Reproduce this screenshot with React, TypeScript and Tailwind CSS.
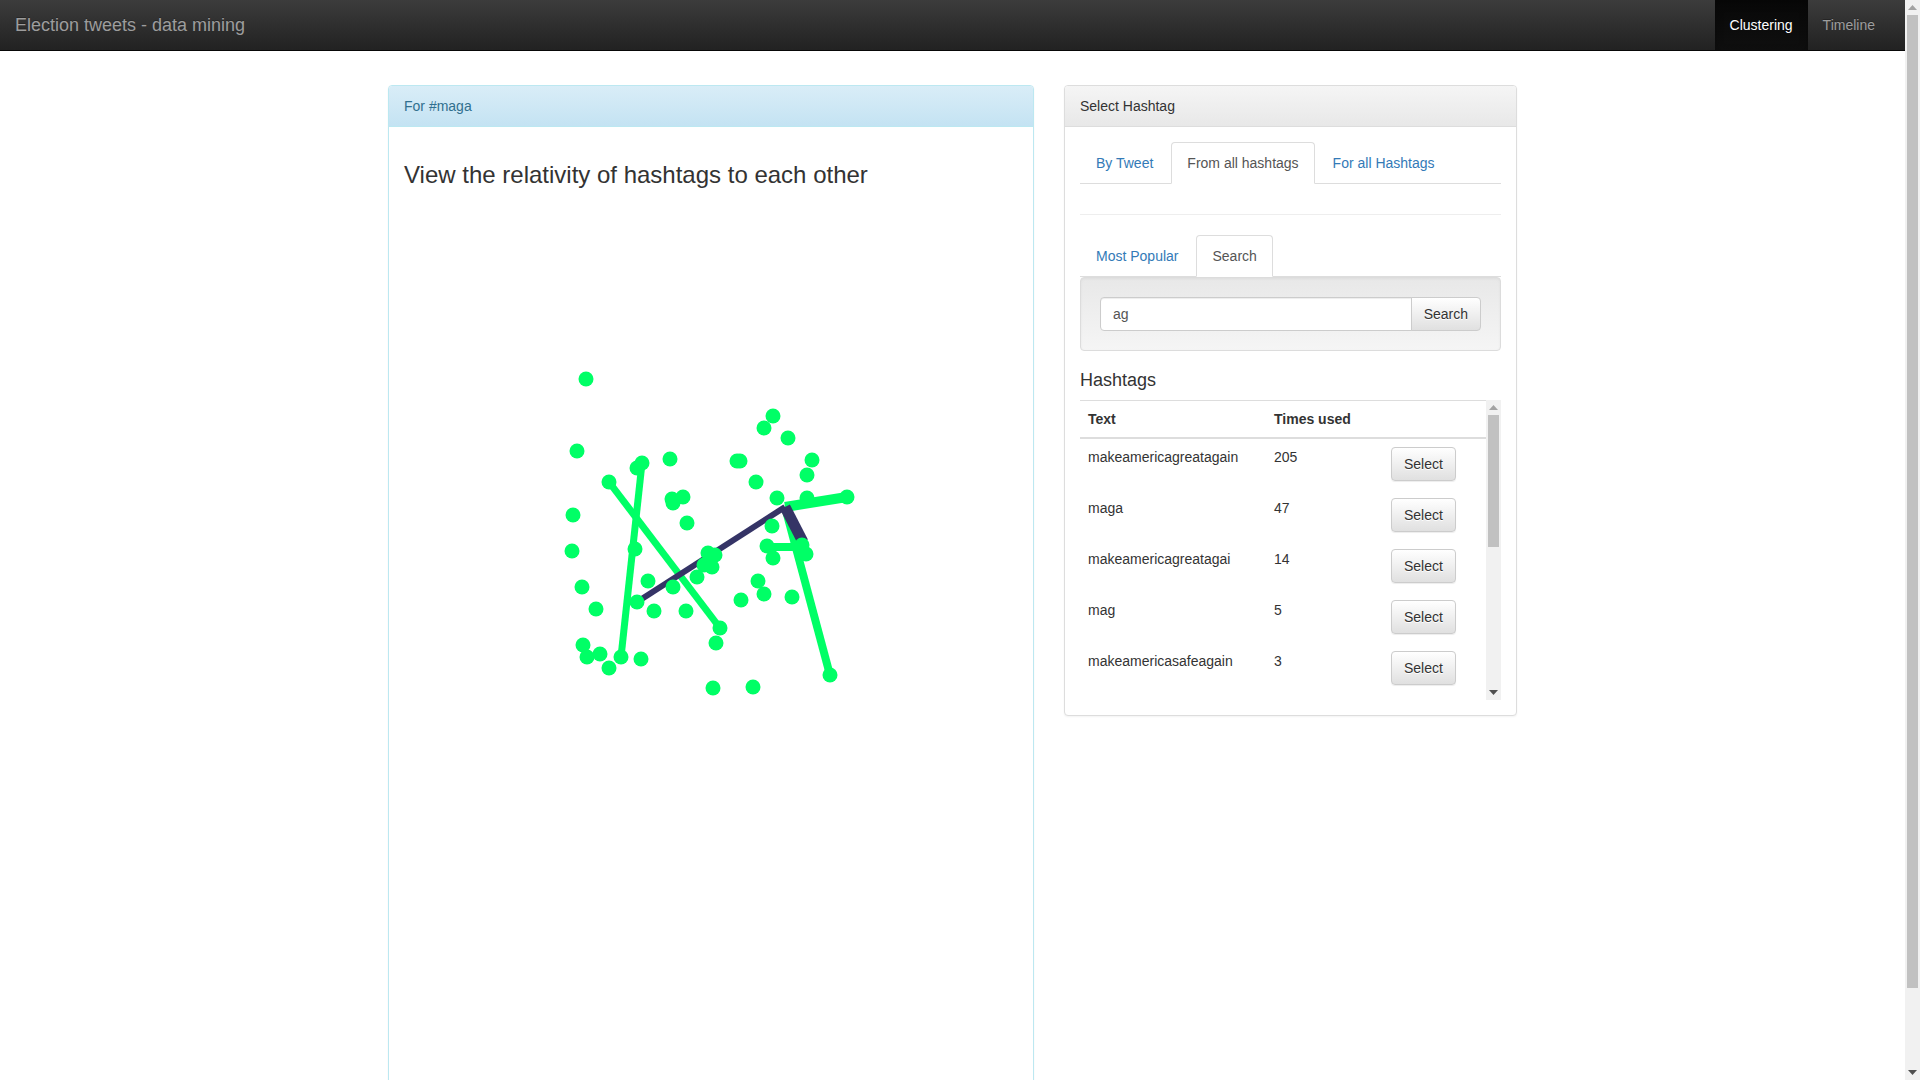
import React from "react";

// node positions inside the graph canvas (canvas origin = top-left of svg)
const nodes: [number, number][] = [
  [182, 181], [173, 253], [169, 317], [168, 353], [178, 389], [192, 411],
  [179, 447], [183, 459], [196, 456], [205, 470], [217, 459], [237, 461],
  [233, 404], [250, 413], [244, 383], [231, 351], [205, 284], [233, 270],
  [238, 265], [266, 261], [268, 301], [279, 299], [269, 305], [283, 325],
  [269, 389], [282, 413], [293, 379], [304, 355], [311, 357], [300, 367],
  [308, 369], [316, 430], [312, 445], [309, 490], [349, 489], [333, 263],
  [336, 263], [352, 284], [360, 230], [369, 218], [384, 240], [408, 262],
  [403, 277], [373, 300], [403, 300], [443, 299], [368, 328], [363, 348],
  [369, 360], [398, 347], [402, 356], [337, 402], [354, 383], [360, 396],
  [388, 399], [426, 477],
];

const greenLinks = [
  { x1: 205, y1: 284, x2: 316, y2: 430, w: 7 },
  { x1: 238, y1: 265, x2: 217, y2: 459, w: 7 },
  { x1: 381, y1: 309, x2: 443, y2: 299, w: 10 },
  { x1: 381, y1: 309, x2: 426, y2: 477, w: 8 },
  { x1: 363, y1: 349, x2: 399, y2: 349, w: 8 },
];

const darkLinks = [
  { x1: 233, y1: 404, x2: 381, y2: 309, w: 6 },
  { x1: 381, y1: 309, x2: 399, y2: 344, w: 11 },
];

const hashtags = [
  { text: "makeamericagreatagain", count: 205 },
  { text: "maga", count: 47 },
  { text: "makeamericagreatagai", count: 14 },
  { text: "mag", count: 5 },
  { text: "makeamericasafeagain", count: 3 },
];

function Tab({ label, active }: { label: string; active?: boolean }) {
  return (
    <li className="-mb-px">
      <a
        className={
          active
            ? "block mr-[2px] px-[15px] py-[10px] leading-[20px] rounded-t-[4px] border border-[#ddd] border-b-transparent bg-white text-[#555] cursor-default"
            : "block mr-[2px] px-[15px] py-[10px] leading-[20px] rounded-t-[4px] border border-transparent text-[#337ab7] cursor-pointer"
        }
      >
        {label}
      </a>
    </li>
  );
}

function SelectButton() {
  return (
    <button className="h-[34px] px-[12px] text-[14px] leading-[20px] text-[#333] rounded-[4px] border border-[#ccc] bg-gradient-to-b from-white to-[#e0e0e0] shadow-[inset_0_1px_0_rgba(255,255,255,.15),0_1px_1px_rgba(0,0,0,.075)] [text-shadow:0_1px_0_#fff]">
      Select
    </button>
  );
}

// classic browser scrollbar look (the screenshot had native scrollbars)
function Arrow({ up, dark }: { up?: boolean; dark?: boolean }) {
  return (
    <div className="h-[15px] flex items-center justify-center shrink-0">
      <svg width="9" height="5" viewBox="0 0 9 5">
        <polygon points={up ? "0,5 4.5,0 9,5" : "0,0 4.5,5 9,0"} fill={dark ? "#505050" : "#a3a3a3"} />
      </svg>
    </div>
  );
}

function Scrollbar({ thumbTop, thumbHeight }: { thumbTop: number; thumbHeight: number }) {
  return (
    <div className="w-[15px] shrink-0 h-full bg-[#f1f1f1] flex flex-col">
      <Arrow up />
      <div className="flex-1 relative">
        <div
          className="absolute left-[2px] right-[2px] bg-[#c1c1c1]"
          style={{ top: thumbTop, height: thumbHeight }}
        />
      </div>
      <Arrow dark />
    </div>
  );
}

export default function App() {
  return (
    <div className="h-screen flex overflow-hidden bg-white font-['Liberation_Sans',Arial,sans-serif] text-[14px] leading-[20px] text-[#333]">
      <div className="flex-1 min-w-0 overflow-hidden">
        {/* Navbar */}
        <nav className="h-[51px] flex justify-between bg-gradient-to-b from-[#3c3c3c] to-[#222] border-b border-[#080808]">
          <a className="px-[15px] py-[15px] text-[18px] leading-[20px] text-[#9d9d9d] [text-shadow:0_-1px_0_rgba(0,0,0,.25)]">
            Election tweets - data mining
          </a>
          <ul className="flex pr-[15px]">
            <li className="flex">
              <a className="px-[15px] py-[15px] leading-[20px] text-white bg-gradient-to-b from-[#080808] to-[#0f0f0f] shadow-[inset_0_3px_9px_rgba(0,0,0,.25)] [text-shadow:0_-1px_0_rgba(0,0,0,.25)]">
                Clustering
              </a>
            </li>
            <li className="flex">
              <a className="px-[15px] py-[15px] leading-[20px] text-[#9d9d9d] [text-shadow:0_-1px_0_rgba(0,0,0,.25)]">
                Timeline
              </a>
            </li>
          </ul>
        </nav>

        {/* Content */}
        <div className="flex items-start gap-[30px] pl-[388px] pt-[34px] pb-[20px]">
          {/* Graph panel */}
          <div className="w-[646px] shrink-0 bg-white border border-[#bce8f1] rounded-[4px] shadow-[0_1px_2px_rgba(0,0,0,.05)]">
            <div className="px-[15px] py-[10px] text-[#31708f] bg-gradient-to-b from-[#d9edf7] to-[#c4e3f3] border-b border-[#bce8f1] rounded-t-[3px]">
              For #maga
            </div>
            <div className="p-[15px]">
              <h3 className="mt-[20px] mb-[10px] text-[24px] leading-[26.4px] text-[#333]">
                View the relativity of hashtags to each other
              </h3>
              <svg width="614" height="930" className="block">
                {greenLinks.map((l, i) => (
                  <line key={"g" + i} x1={l.x1} y1={l.y1} x2={l.x2} y2={l.y2} stroke="#00ff66" strokeWidth={l.w} />
                ))}
                {darkLinks.map((l, i) => (
                  <line key={"d" + i} x1={l.x1} y1={l.y1} x2={l.x2} y2={l.y2} stroke="#353466" strokeWidth={l.w} />
                ))}
                {nodes.map(([x, y], i) => (
                  <circle key={i} cx={x} cy={y} r={7.5} fill="#00ff66" />
                ))}
              </svg>
            </div>
          </div>

          {/* Select hashtag panel */}
          <div className="w-[453px] shrink-0 bg-white border border-[#ddd] rounded-[4px] shadow-[0_1px_2px_rgba(0,0,0,.05)]">
            <div className="px-[15px] py-[10px] text-[#333] bg-gradient-to-b from-[#f5f5f5] to-[#e8e8e8] border-b border-[#ddd] rounded-t-[3px]">
              Select Hashtag
            </div>
            <div className="p-[15px]">
              <ul className="flex border-b border-[#ddd]">
                <Tab label="By Tweet" />
                <Tab label="From all hashtags" active />
                <Tab label="For all Hashtags" />
              </ul>
              <div className="mt-[30px] mb-[20px] border-t border-[#eee]" />
              <ul className="flex border-b border-[#ddd]">
                <Tab label="Most Popular" />
                <Tab label="Search" active />
              </ul>
              <div className="p-[19px] border border-[#dcdcdc] rounded-[4px] bg-gradient-to-b from-[#e8e8e8] to-[#f5f5f5] shadow-[inset_0_1px_3px_rgba(0,0,0,.05),0_1px_0_rgba(255,255,255,.1)]">
                <div className="flex">
                  <input
                    defaultValue="ag"
                    className="flex-1 min-w-0 h-[34px] px-[12px] text-[14px] text-[#555] bg-white border border-[#ccc] rounded-l-[4px] shadow-[inset_0_1px_1px_rgba(0,0,0,.075)] outline-none"
                  />
                  <button className="h-[34px] px-[12px] -ml-px text-[14px] text-[#333] rounded-r-[4px] border border-[#ccc] bg-gradient-to-b from-white to-[#e0e0e0] [text-shadow:0_1px_0_#fff]">
                    Search
                  </button>
                </div>
              </div>
              <h4 className="mt-[20px] mb-[9px] text-[18px] leading-[19.8px] text-[#333]">Hashtags</h4>
              <div className="h-[300px] flex">
                <div className="flex-1 min-w-0 overflow-hidden">
                  <table className="w-full table-fixed border-collapse border-t border-[#ddd]">
                    <thead>
                      <tr className="border-b-2 border-[#ddd]">
                        <th className="w-[186px] p-[8px] text-left font-bold">Text</th>
                        <th className="w-[117px] p-[8px] text-left font-bold">Times used</th>
                        <th className="p-[8px]"></th>
                      </tr>
                    </thead>
                    <tbody>
                      {hashtags.map((h) => (
                        <tr key={h.text}>
                          <td className="px-[8px] pt-[8px] pb-[9px] align-top">{h.text}</td>
                          <td className="px-[8px] pt-[8px] pb-[9px] align-top">{h.count}</td>
                          <td className="px-[8px] pt-[8px] pb-[9px] align-top">
                            <SelectButton />
                          </td>
                        </tr>
                      ))}
                    </tbody>
                  </table>
                </div>
                <Scrollbar thumbTop={0} thumbHeight={132} />
              </div>
            </div>
          </div>
        </div>
      </div>
      <Scrollbar thumbTop={0} thumbHeight={973} />
    </div>
  );
}
